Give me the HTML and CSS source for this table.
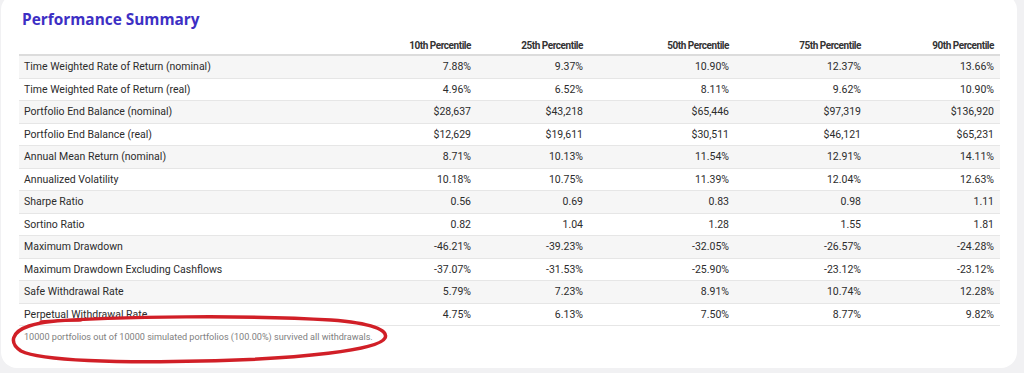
FILE: index.html
```html
<!DOCTYPE html>
<html>
<head>
<meta charset="utf-8">
<link rel="stylesheet" href="styles.css">
</head>
<body>
<div class="card">
  <h2 class="title">Performance Summary</h2>
  <table class="summary">
    <colgroup>
      <col class="c-label"><col class="c1"><col class="c2"><col class="c3"><col class="c4"><col class="c5">
    </colgroup>
    <thead>
      <tr><th></th><th>10th Percentile</th><th>25th Percentile</th><th>50th Percentile</th><th>75th Percentile</th><th>90th Percentile</th></tr>
    </thead>
    <tbody>
      <tr><td>Time Weighted Rate of Return (nominal)</td><td>7.88%</td><td>9.37%</td><td>10.90%</td><td>12.37%</td><td>13.66%</td></tr>
      <tr><td>Time Weighted Rate of Return (real)</td><td>4.96%</td><td>6.52%</td><td>8.11%</td><td>9.62%</td><td>10.90%</td></tr>
      <tr><td>Portfolio End Balance (nominal)</td><td>$28,637</td><td>$43,218</td><td>$65,446</td><td>$97,319</td><td>$136,920</td></tr>
      <tr><td>Portfolio End Balance (real)</td><td>$12,629</td><td>$19,611</td><td>$30,511</td><td>$46,121</td><td>$65,231</td></tr>
      <tr><td>Annual Mean Return (nominal)</td><td>8.71%</td><td>10.13%</td><td>11.54%</td><td>12.91%</td><td>14.11%</td></tr>
      <tr><td>Annualized Volatility</td><td>10.18%</td><td>10.75%</td><td>11.39%</td><td>12.04%</td><td>12.63%</td></tr>
      <tr><td>Sharpe Ratio</td><td>0.56</td><td>0.69</td><td>0.83</td><td>0.98</td><td>1.11</td></tr>
      <tr><td>Sortino Ratio</td><td>0.82</td><td>1.04</td><td>1.28</td><td>1.55</td><td>1.81</td></tr>
      <tr><td>Maximum Drawdown</td><td>-46.21%</td><td>-39.23%</td><td>-32.05%</td><td>-26.57%</td><td>-24.28%</td></tr>
      <tr><td>Maximum Drawdown Excluding Cashflows</td><td>-37.07%</td><td>-31.53%</td><td>-25.90%</td><td>-23.12%</td><td>-23.12%</td></tr>
      <tr><td>Safe Withdrawal Rate</td><td>5.79%</td><td>7.23%</td><td>8.91%</td><td>10.74%</td><td>12.28%</td></tr>
      <tr><td>Perpetual Withdrawal Rate</td><td>4.75%</td><td>6.13%</td><td>7.50%</td><td>8.77%</td><td>9.82%</td></tr>
    </tbody>
  </table>
  <p class="note">10000 portfolios out of 10000 simulated portfolios (100.00%) survived all withdrawals.</p>
  <svg class="scribble" width="400" height="60" viewBox="0 0 400 60">
    <path d="M40 12 C 120 6, 250 5, 330 10 C 370 13, 388 20, 384 28 C 378 40, 300 49, 200 51 C 120 53, 40 51, 20 41 C 8 33, 10 22, 28 16 C 40 12, 60 10, 80 10" fill="none" stroke="#d11f27" stroke-width="3.5" stroke-linecap="round"/>
  </svg>
</div>
</body>
</html>
```

FILE: styles.css
```css
html, body {
  margin: 0;
  padding: 0;
}
body {
  background: #f1f1f3;
  font-family: Roboto, "Liberation Sans", Arial, sans-serif;
  width: 1024px;
  height: 373px;
  overflow: hidden;
}
.card {
  position: relative;
  box-sizing: border-box;
  margin: -6px 0 0 1px;
  width: 1016px;
  height: 374px;
  background: #ffffff;
  border-radius: 16px;
  padding: 16px 18px 0 18px;
}
.title {
  margin: 0 0 0 3px;
  font-family: "Open Sans", Roboto, sans-serif;
  font-weight: 700;
  font-size: 15.4px;
  line-height: 20px;
  color: #3d2fc4;
}
.summary {
  margin-top: 6px;
  width: 981px;
  border-collapse: collapse;
  table-layout: fixed;
  font-size: 10.5px;
  color: #2c2c2c;
}
.c-label { width: 348px; }
.c1 { width: 110px; }
.c2 { width: 112px; }
.c3 { width: 146px; }
.c4 { width: 132px; }
.c5 { width: 133px; }
.summary th {
  height: 18px;
  padding: 0 6px 0 5px;
  text-align: right;
  font-weight: 700;
  font-size: 10px;
  letter-spacing: -0.45px;
  color: #333;
  border-bottom: 2px solid #dcdcdc;
  vertical-align: middle;
}
.summary td {
  height: 21.5px;
  padding: 0 6px 0 5px;
  text-align: right;
  border-bottom: 1px solid #e6e6e6;
  vertical-align: middle;
  white-space: nowrap;
}
.summary td:first-child {
  text-align: left;
}
.summary tbody tr:nth-child(odd) td {
  background: #f6f6f6;
}
.note {
  margin: 6px 0 0 5px;
  font-size: 9.1px;
  color: #808080;
}
.scribble {
  position: absolute;
  left: 0;
  top: 316px;
}
```
